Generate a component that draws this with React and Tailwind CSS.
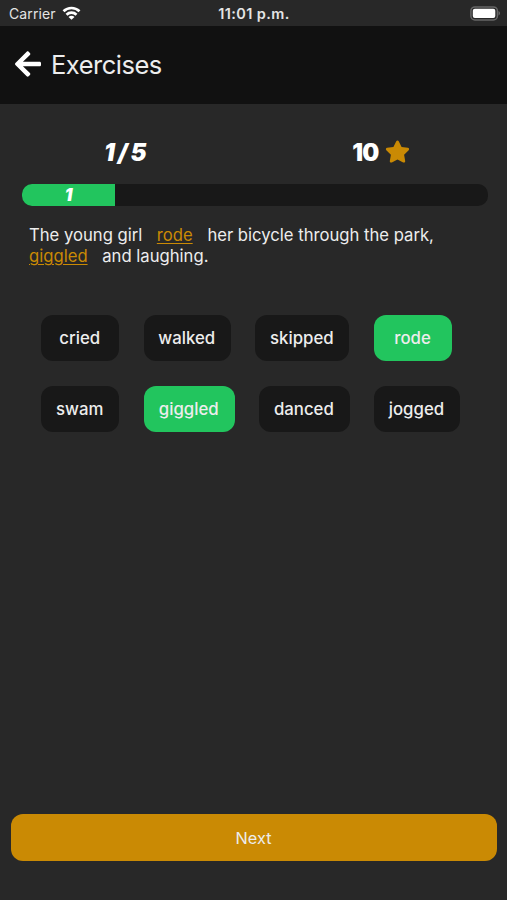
import { useState } from 'react';
import { FaArrowLeft, FaStar } from 'react-icons/fa';

const WORDS = [
  { text: 'cried', width: 'w-[78.4px]' },
  { text: 'walked', width: 'w-[87px]' },
  { text: 'skipped', width: 'w-[94.3px]' },
  { text: 'rode', width: 'w-[78.4px]' },
  { text: 'swam', width: 'w-[78.4px]' },
  { text: 'giggled', width: 'w-[91px]' },
  { text: 'danced', width: 'w-[90.4px]' },
  { text: 'jogged', width: 'w-[86px]' },
];

function StatusBar() {
  return (
    <div className="h-[26px] pl-[9px] pr-[6px] grid grid-cols-3 items-center text-[#e4e4e4]">
      <div className="flex items-center gap-[6px]">
        <span className="pt-[2px] text-[14px] leading-none tracking-[0.1px]">Carrier</span>
        <svg className="w-[19px] h-[14px]" viewBox="0 0 18 14" fill="none" stroke="#fff" strokeWidth="2.7">
          <path d="M1 5.2C5.5 .9 12.5 .9 17 5.2" />
          <path d="M4 8.7C6.8 6 11.2 6 14 8.7" />
          <path d="M9 13.8L6 10.9C7.7 9.4 10.3 9.4 12 10.9Z" fill="#fff" stroke="none" />
        </svg>
      </div>
      <span className="pt-[2px] pr-[2px] text-center text-[14.5px] leading-none font-semibold tracking-[0.4px] whitespace-nowrap">
        11:01 p.m.
      </span>
      <svg className="justify-self-end w-[31px] h-[15px]" viewBox="0 0 31 15">
        <rect x="0.9" y="0.9" width="26.5" height="13" rx="4" fill="none" stroke="#666" strokeWidth="1.5" />
        <rect x="2.8" y="2.8" width="22.5" height="9.2" rx="2" fill="#fff" />
        <path d="M28.5 5v4.5c2-.8 2-3.7 0-4.5z" fill="#666" />
      </svg>
    </div>
  );
}

function Blank({ children, className }) {
  return (
    <span className={`mr-[14.7px] text-[#ca8a04] underline decoration-1 underline-offset-2 ${className ?? ''}`}>
      {children}
    </span>
  );
}

export default function App() {
  const [selected, setSelected] = useState(['rode', 'giggled']);

  const toggle = (word) => {
    setSelected((prev) => (prev.includes(word) ? prev.filter((w) => w !== word) : [...prev, word]));
  };

  return (
    <div className="h-screen flex flex-col bg-[#282828] text-[#ededed] font-['Inter',sans-serif]">
      <StatusBar />
      <header className="h-[78px] pl-[15px] flex items-center gap-[10px] bg-[#111111]">
        <FaArrowLeft className="w-[26px] h-[30px] mb-[2px] text-white" />
        <h1 className="text-[25.5px] leading-none tracking-[-0.5px]">Exercises</h1>
      </header>

      <main className="flex-1 flex flex-col">
        <div className="mt-[35px] h-[26px] grid grid-cols-2 font-black text-white text-[24px] leading-none">
          <div className="flex items-center justify-center pr-[4px] italic tracking-[-1px]">1 / 5</div>
          <div className="flex items-center justify-center gap-[7px] pl-[2px]">
            <span className="tracking-[-1px]">10</span>
            <FaStar className="w-[25px] h-[25px] mb-[2px] text-[#ca8a04]" />
          </div>
        </div>

        <div className="mt-[19px] mr-[19px] ml-[22px] h-[22px] rounded-[10px] bg-[#181818] overflow-hidden">
          <div className="w-1/5 h-full pt-[1px] flex items-center justify-center bg-[#22c55e] font-black italic text-white text-[17px] leading-none">
            1
          </div>
        </div>

        <p className="mt-[19px] ml-[29px] text-[16.65px] leading-[21px] whitespace-nowrap">
          The young girl
          <Blank className="ml-[14.5px]">rode</Blank>
          her bicycle through the park,
          <br />
          <Blank>giggled</Blank>
          and laughing.
        </p>

        <div className="mt-[48px] pl-[41px] pr-[40px] flex flex-wrap gap-x-[24.4px] gap-y-[25px]">
          {WORDS.map(({ text, width }) => (
            <button
              key={text}
              onClick={() => toggle(text)}
              className={`${width} h-[46px] pt-[2px] pr-[1px] rounded-[12px] text-[16.8px] font-medium ${
                selected.includes(text) ? 'bg-[#22c55e]' : 'bg-[#181818]'
              }`}
            >
              {text}
            </button>
          ))}
        </div>
      </main>

      <button className="mx-[10.5px] mb-[39px] h-[47px] pt-[1px] rounded-[12px] bg-[#ca8a04] text-[16.3px]">Next</button>
    </div>
  );
}
